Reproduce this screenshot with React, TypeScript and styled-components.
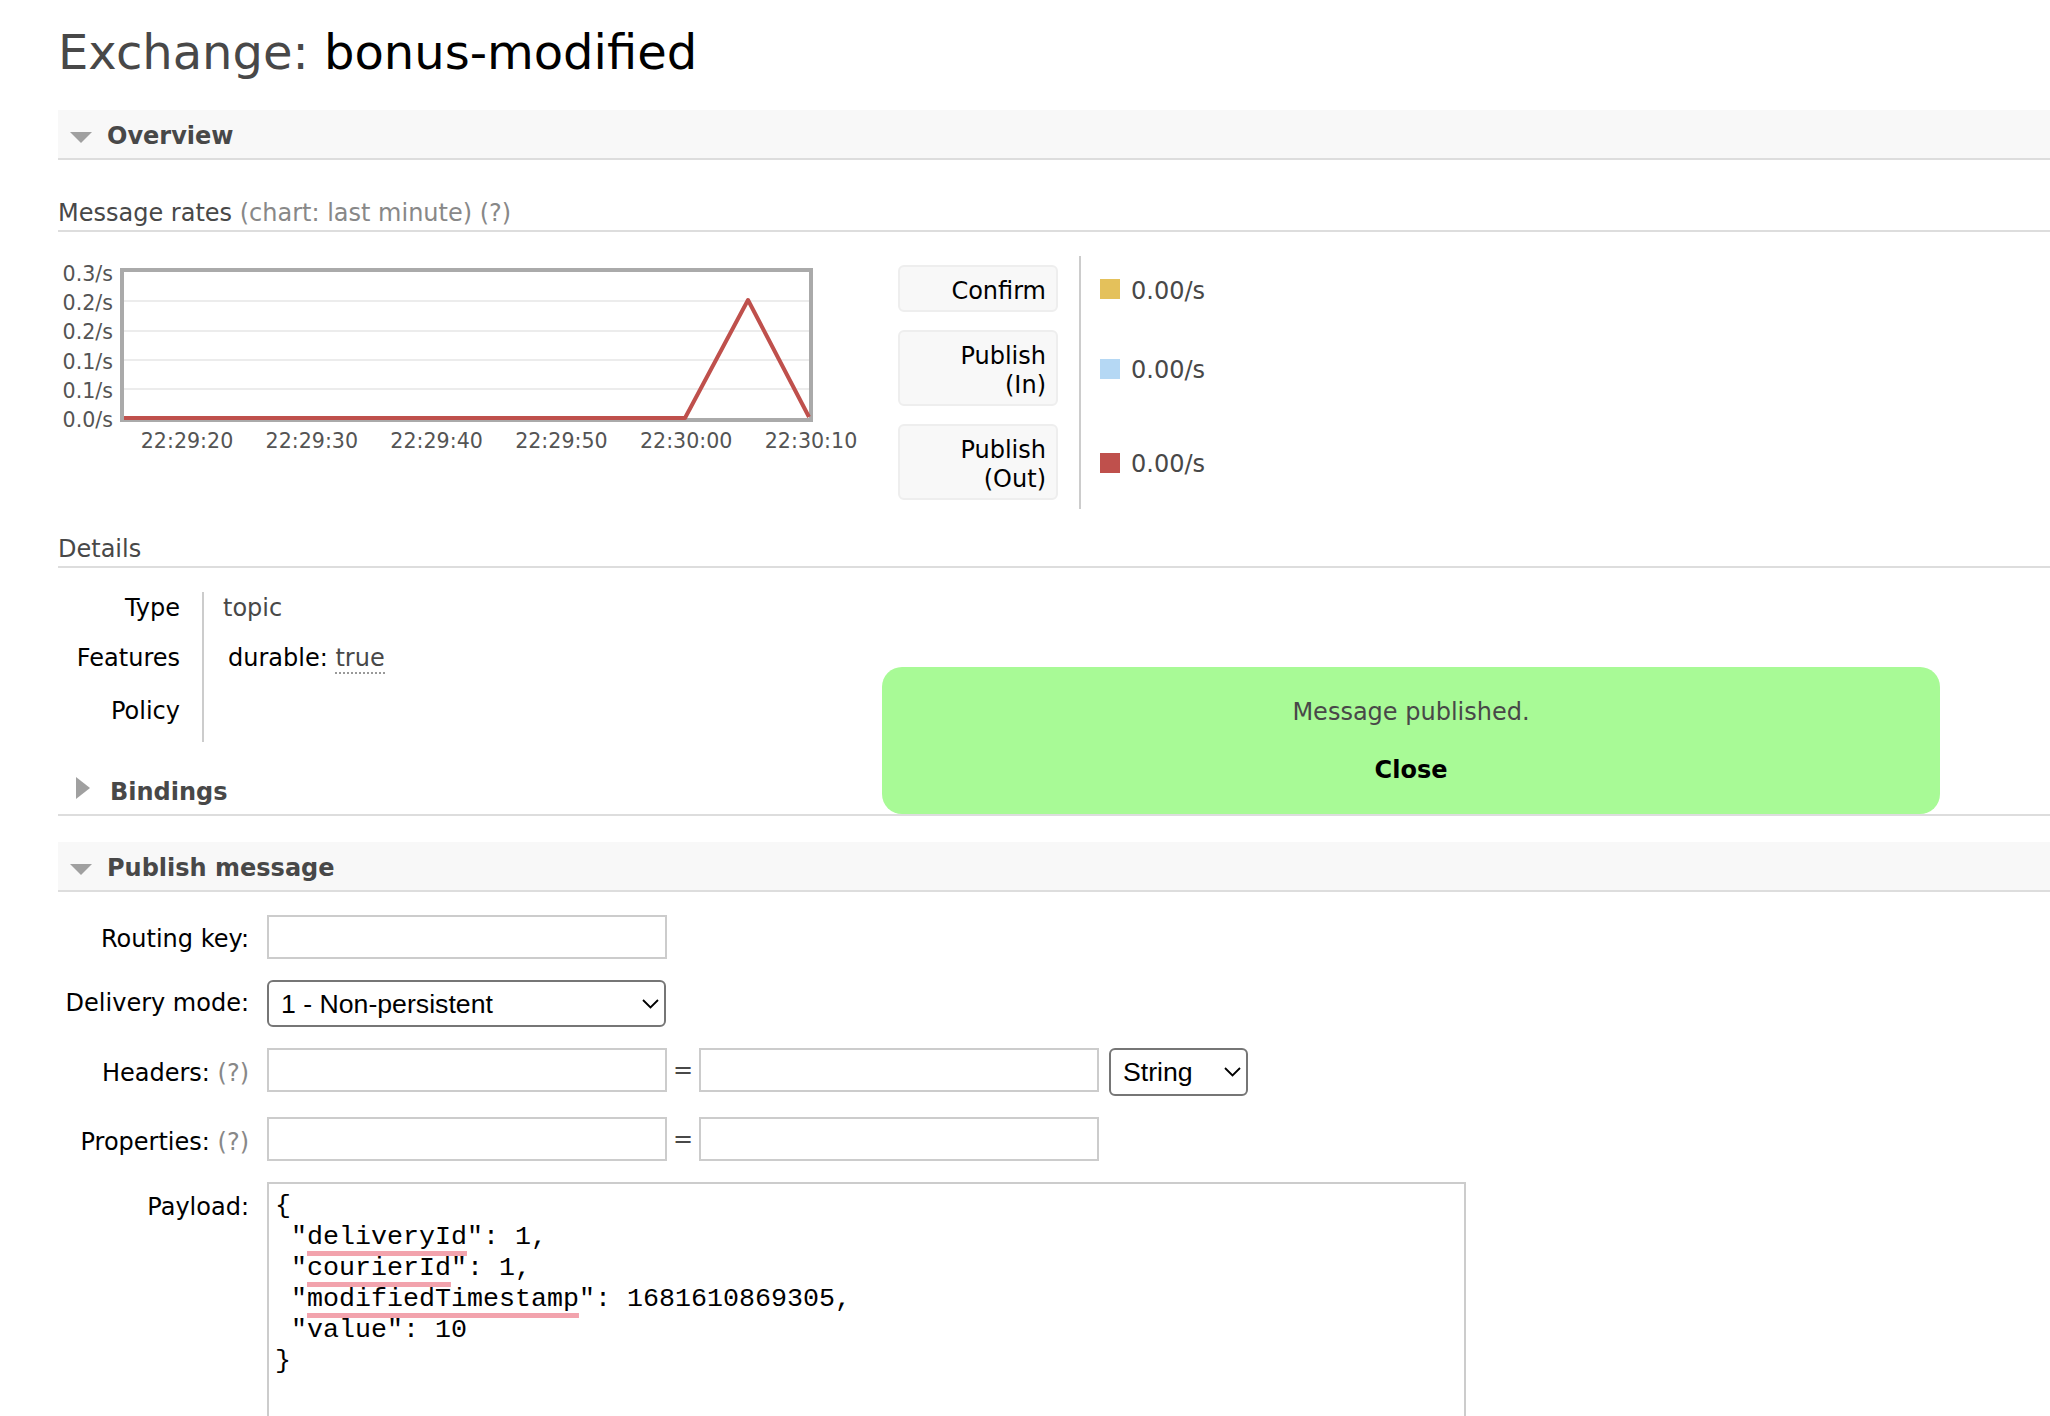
import React from "react";
import styled, { createGlobalStyle } from "styled-components";

const GlobalStyle = createGlobalStyle`
  html, body {
    margin: 0;
    padding: 0;
    background: #fff;
    overflow: hidden;
  }
  body {
    font-family: "DejaVu Sans", Verdana, sans-serif;
    font-size: 24px;
    line-height: 28px;
    color: #484848;
  }
`;

const Page = styled.div`
  position: relative;
  padding-left: 58px;
`;

const Title = styled.h1`
  margin: 0;
  padding-top: 24px;
  font-size: 48px;
  line-height: 56px;
  font-weight: normal;
  color: #484848;
`;

const TitleName = styled.span`
  color: #000;
`;

const SectionBar = styled.div<{ $open: boolean; $mt: number }>`
  display: flex;
  align-items: center;
  height: 50px;
  box-sizing: border-box;
  margin-top: ${(p) => p.$mt}px;
  padding: 3px 0 0 12px;
  background: ${(p) => (p.$open ? "#f8f8f8" : "#fff")};
  border-bottom: 2px solid #ddd;
  font-weight: bold;
  color: #484848;
`;

const Arrow = styled.span<{ $open: boolean }>`
  width: 0;
  height: 0;
  ${(p) =>
    p.$open
      ? `
    border-left: 11.5px solid transparent;
    border-right: 11.5px solid transparent;
    border-top: 11px solid #a0a0a0;
    margin: 3px 15px 0 0;
  `
      : `
    border-top: 11px solid transparent;
    border-bottom: 11px solid transparent;
    border-left: 14px solid #a0a0a0;
    margin: 0 20px 8px 6px;
  `}
`;

const SubHeading = styled.h3<{ $mt: number }>`
  margin: ${(p) => p.$mt}px 0 0;
  padding-bottom: 3px;
  border-bottom: 2px solid #ddd;
  font-size: 24px;
  line-height: 28px;
  font-weight: normal;
  color: #484848;
`;

const Hint = styled.span`
  color: #888;
`;

const ChartRow = styled.div`
  display: flex;
  align-items: flex-start;
  margin-top: 24px;
`;

const ChartSvg = styled.svg`
  flex: none;
  display: block;
  text {
    fill: #545454;
    font-family: "DejaVu Sans", Verdana, sans-serif;
    font-size: 20.6px;
  }
`;

const Legend = styled.div`
  display: grid;
  grid-template-columns: 160px auto;
  column-gap: 21px;
  margin-left: 30px;
`;

const KeyCell = styled.div`
  padding: 9px 0;
`;

const KeyBox = styled.div`
  box-sizing: border-box;
  padding: 10px 10px 4px;
  background: #f8f8f8;
  border: 2px solid #eee;
  border-radius: 6px;
  text-align: right;
  color: #000;
  line-height: 29px;
`;

const ValueCell = styled.div`
  display: flex;
  align-items: center;
  gap: 11px;
  padding: 4px 0 0 19px;
  border-left: 2px solid #ccc;
`;

const Swatch = styled.span<{ $color: string }>`
  width: 20px;
  height: 20px;
  margin-top: -3px;
  background: ${(p) => p.$color};
`;

const Facts = styled.div`
  display: grid;
  grid-template-columns: 144px auto;
  margin-top: 24px;
`;

const FactLabel = styled.div<{ $pb: number }>`
  padding: 2px 22px ${(p) => p.$pb}px 0;
  text-align: right;
  color: #000;
`;

const FactValue = styled.div<{ $pb: number }>`
  padding: 2px 0 ${(p) => p.$pb}px 19px;
  border-left: 2px solid #ccc;
`;

const Durable = styled.span`
  margin-left: 5px;
  color: #000;
`;

const Dotted = styled.span`
  color: #484848;
  border-bottom: 2px dotted #999;
`;

const Form = styled.div`
  display: flex;
  flex-direction: column;
  gap: 21px;
  margin-top: 23px;
`;

const FormRow = styled.div`
  display: flex;
  align-items: flex-start;
`;

const FormLabel = styled.label<{ $pt: number }>`
  width: 191px;
  margin-right: 18px;
  padding-top: ${(p) => p.$pt}px;
  text-align: right;
  color: #000;
`;

const TextInput = styled.input`
  width: 400px;
  height: 44px;
  box-sizing: border-box;
  margin: 0;
  padding: 0 8px;
  border: 2px solid #ccc;
  font-size: 24px;
`;

const Equals = styled.span`
  width: 32px;
  padding-top: 8px;
  text-align: center;
  color: #484848;
`;

const SelectWrap = styled.div<{ $w: number; $h: number; $ml?: number }>`
  position: relative;
  width: ${(p) => p.$w}px;
  height: ${(p) => p.$h}px;
  margin-left: ${(p) => p.$ml ?? 0}px;
`;

const Select = styled.select`
  appearance: none;
  width: 100%;
  height: 100%;
  box-sizing: border-box;
  margin: 0;
  padding: 0 34px 0 12px;
  border: 2px solid #767676;
  border-radius: 6px;
  background: #fff;
  color: #000;
  font-family: "Liberation Sans", Arial, sans-serif;
  font-size: 26.67px;
`;

const Chevron = styled.svg`
  position: absolute;
  right: 7px;
  top: 50%;
  transform: translateY(-50%);
  pointer-events: none;
`;

const Payload = styled.div`
  width: 1199px;
  height: 260px;
  box-sizing: border-box;
  padding: 7px 6px 6px;
  border: 2px solid #ccc;
  font-family: "Liberation Mono", "Courier New", monospace;
  font-size: 26.67px;
  line-height: 31px;
  white-space: pre;
  color: #000;
`;

const Misspelled = styled.span`
  text-decoration: underline;
  text-decoration-color: #f2a3ad;
  text-decoration-thickness: 5px;
  text-underline-offset: 7px;
  text-decoration-skip-ink: none;
`;

const Popup = styled.div`
  position: absolute;
  left: 882px;
  top: 667px;
  width: 1058px;
  height: 147px;
  box-sizing: border-box;
  padding-top: 31px;
  border-radius: 20px;
  background: #a8fa96;
  text-align: center;
  color: #484848;
`;

const CloseLink = styled.div`
  margin-top: 30px;
  font-weight: bold;
  color: #000;
`;

const yTicks = ["0.3/s", "0.2/s", "0.2/s", "0.1/s", "0.1/s", "0.0/s"];
const xTicks = ["22:29:20", "22:29:30", "22:29:40", "22:29:50", "22:30:00", "22:30:10"];
const gridLines = [45, 75, 104, 133];

const rates = [
  { label: ["Confirm"], color: "#e4c15b" },
  { label: ["Publish", "(In)"], color: "#b5d8f4" },
  { label: ["Publish", "(Out)"], color: "#bf504c" },
];

const RateChart: React.FC = () => (
  <ChartSvg width={810} height={200}>
    {gridLines.map((y) => (
      <line key={y} x1={66} x2={751} y1={y} y2={y} stroke="#ececec" strokeWidth={2} />
    ))}
    <rect x={64} y={14} width={689} height={150} fill="none" stroke="#aaa" strokeWidth={4} />
    <polyline
      points="66,162 627,162 690,44 751,161"
      fill="none"
      stroke="#bf504c"
      strokeWidth={4}
      strokeLinejoin="round"
    />
    {yTicks.map((t, i) => (
      <text key={i} x={55} y={25 + i * 29.2} textAnchor="end">
        {t}
      </text>
    ))}
    {xTicks.map((t, i) => (
      <text key={t} x={129 + i * 124.8} y={192} textAnchor="middle">
        {t}
      </text>
    ))}
  </ChartSvg>
);

const Down = () => (
  <Chevron width={17} height={10} viewBox="0 0 17 10">
    <path d="M1 1 L8.5 8.5 L16 1" fill="none" stroke="#000" strokeWidth={1.8} />
  </Chevron>
);

export default function App() {
  return (
    <Page>
      <GlobalStyle />
      <Title>
        Exchange: <TitleName>bonus-modified</TitleName>
      </Title>

      <SectionBar $open $mt={30}>
        <Arrow $open />
        Overview
      </SectionBar>

      <SubHeading $mt={39}>
        Message rates <Hint>(chart: last minute) (?)</Hint>
      </SubHeading>

      <ChartRow>
        <RateChart />
        <Legend>
          {rates.map((r) => (
            <React.Fragment key={r.color}>
              <KeyCell>
                <KeyBox>
                  {r.label.map((l) => (
                    <div key={l}>{l}</div>
                  ))}
                </KeyBox>
              </KeyCell>
              <ValueCell>
                <Swatch $color={r.color} />
                0.00/s
              </ValueCell>
            </React.Fragment>
          ))}
        </Legend>
      </ChartRow>

      <SubHeading $mt={26}>Details</SubHeading>
      <Facts>
        <FactLabel $pb={20}>Type</FactLabel>
        <FactValue $pb={20}>topic</FactValue>
        <FactLabel $pb={23}>Features</FactLabel>
        <FactValue $pb={23}>
          <Durable>durable: </Durable>
          <Dotted>true</Dotted>
        </FactValue>
        <FactLabel $pb={17}>Policy</FactLabel>
        <FactValue $pb={17} />
      </Facts>

      <SectionBar $open={false} $mt={24}>
        <Arrow $open={false} />
        Bindings
      </SectionBar>

      <SectionBar $open $mt={26}>
        <Arrow $open />
        Publish message
      </SectionBar>

      <Form>
        <FormRow>
          <FormLabel $pt={10}>Routing key:</FormLabel>
          <TextInput />
        </FormRow>
        <FormRow>
          <FormLabel $pt={9}>Delivery mode:</FormLabel>
          <SelectWrap $w={399} $h={47}>
            <Select defaultValue="1">
              <option value="1">1 - Non-persistent</option>
              <option value="2">2 - Persistent</option>
            </Select>
            <Down />
          </SelectWrap>
        </FormRow>
        <FormRow>
          <FormLabel $pt={11}>
            Headers: <Hint>(?)</Hint>
          </FormLabel>
          <TextInput />
          <Equals>=</Equals>
          <TextInput />
          <SelectWrap $w={139} $h={48} $ml={10}>
            <Select defaultValue="string">
              <option value="string">String</option>
              <option value="number">Number</option>
            </Select>
            <Down />
          </SelectWrap>
        </FormRow>
        <FormRow>
          <FormLabel $pt={11}>
            Properties: <Hint>(?)</Hint>
          </FormLabel>
          <TextInput />
          <Equals>=</Equals>
          <TextInput />
        </FormRow>
        <FormRow>
          <FormLabel $pt={11}>Payload:</FormLabel>
          <Payload>
            {"{\n \""}
            <Misspelled>deliveryId</Misspelled>
            {"\": 1,\n \""}
            <Misspelled>courierId</Misspelled>
            {"\": 1,\n \""}
            <Misspelled>modifiedTimestamp</Misspelled>
            {"\": 1681610869305,\n \"value\": 10\n}"}
          </Payload>
        </FormRow>
      </Form>

      <Popup>
        Message published.
        <CloseLink>Close</CloseLink>
      </Popup>
    </Page>
  );
}
